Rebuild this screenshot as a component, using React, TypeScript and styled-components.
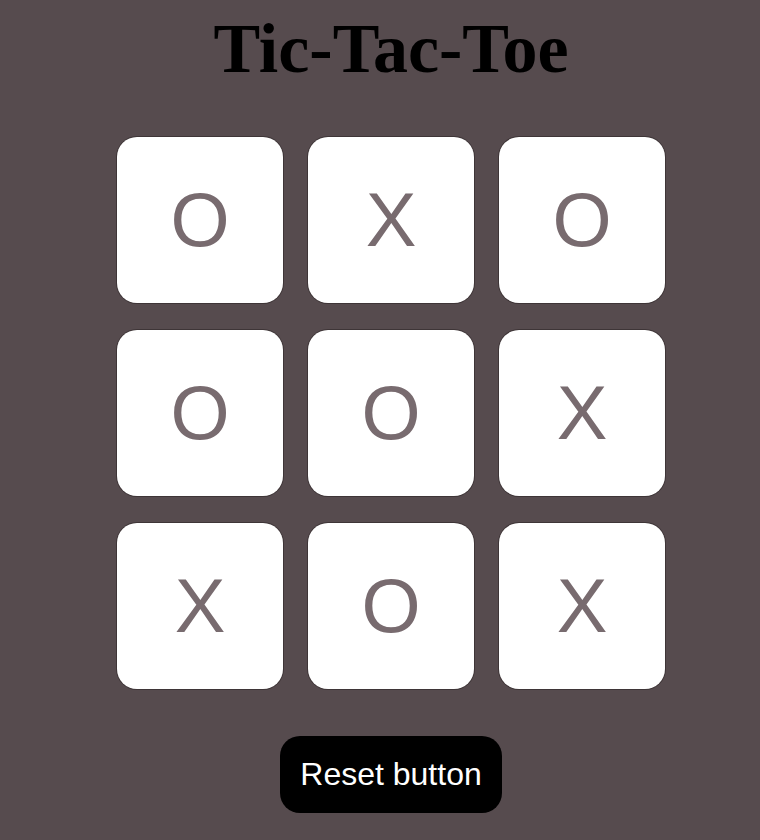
import React, { useState } from 'react'
import styled, { createGlobalStyle } from 'styled-components'

const GlobalStyle = createGlobalStyle`
  html, body {
    margin: 0;
    padding: 0;
    background: #564b4e;
  }
  body {
    font-family: "Liberation Sans", Arial, sans-serif;
  }
`

const start = ['O', 'X', 'O', 'O', 'O', 'X', 'X', 'O', 'X']

export default function App() {
  const [board, setBoard] = useState<string[]>(start)

  return (
    <>
      <GlobalStyle />
      <Page>
        <Title>Tic-Tac-Toe</Title>
        <Board>
          {board.map((mark, i) => (
            <Cell key={i}>{mark}</Cell>
          ))}
        </Board>
        <ResetButton onClick={() => setBoard(Array(9).fill(''))}>Reset button</ResetButton>
      </Page>
    </>
  )
}

const Page = styled.div`
  width: 100%;
  min-height: 840px;
  box-sizing: border-box;
  padding: 9px 0 0 22px;
  display: flex;
  flex-direction: column;
  align-items: center;
`
const Title = styled.h1`
  margin: 0;
  font-family: "Liberation Serif", "Times New Roman", serif;
  font-weight: 700;
  font-size: 70px;
  line-height: 80px;
  color: #000;
`
const Board = styled.div`
  margin-top: 48px;
  display: grid;
  grid-template-columns: repeat(3, 166px);
  grid-auto-rows: 166px;
  column-gap: 25px;
  row-gap: 27px;
`
const Cell = styled.div`
  display: flex;
  align-items: center;
  justify-content: center;
  background: #fff;
  border-radius: 20px;
  box-shadow: 0 0 0 1px #3e3537;
  color: #786b6f;
  font-size: 76px;
  line-height: 1;
`
const ResetButton = styled.button`
  margin-top: 47px;
  width: 222px;
  height: 77px;
  border: none;
  border-radius: 20px;
  background: #000;
  color: #fff;
  font-family: "Liberation Sans", Arial, sans-serif;
  font-size: 32px;
  cursor: pointer;
`
